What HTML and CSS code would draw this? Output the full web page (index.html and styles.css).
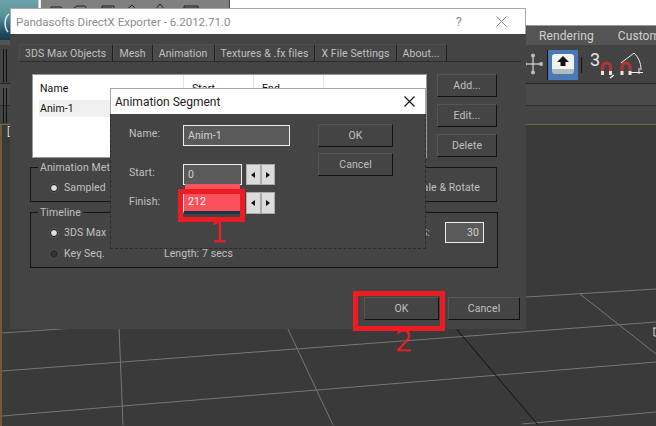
FILE: index.html
```html
<!DOCTYPE html>
<html lang="en">
<head>
<meta charset="utf-8">
<title>Pandasofts DirectX Exporter</title>
<link rel="stylesheet" href="styles.css">
</head>
<body>
<div class="stage">
  <div class="app">
    <div class="app-top">
      <div class="logo"><svg width="39" height="40" viewBox="0 0 39 40"><path d="M9 14C4 18 4 27 8 32" fill="none" stroke="#e8eef0" stroke-width="1.5"/></svg></div>
      <div class="quick">
        <svg width="188" height="9" viewBox="0 0 188 9" fill="none" stroke="#222"><path d="M10 9V6h10l3 3M33 9V7l3-2h8l2 4M61 9V5h12v4M61 7h10M85 9l6-5 5 5M114 9l5-6 5 6M143 9V5h14v4M143 7h14M165 8h5"/></svg>
      </div>
    </div>
    <div class="menu"><span>Rendering</span><span>Customize</span></div>
    <div class="toolbar">
      <div class="slot"><i></i><i></i></div>
      <div class="tools">
        <svg class="tool-move" width="20" height="24" viewBox="0 0 20 24"><path d="M10 5v14M3 12h14" stroke="#eee"/><g fill="#bbb"><circle cx="10" cy="3.500" r="2"/><circle cx="10" cy="20.500" r="2"/><circle cx="2" cy="12" r="2"/><circle cx="18" cy="12" r="2"/></g></svg>
        <div class="tool-active"><div class="key"><svg width="12" height="10" viewBox="0 0 12 10"><path d="M6 0l6 6H8.500v4h-5V6H0z" fill="#111"/></svg></div></div>
        <div class="tool-sep"></div>
        <span class="snap-num">3</span>
        <svg class="snap" width="46" height="28" viewBox="0 0 46 28" fill="none">
          <path d="M2.500 20v-5a4 4 0 0 1 8 0v5" stroke="#b03535" stroke-width="3"/><path d="M2.500 19v4M10.500 19v4" stroke="#e4e4e4" stroke-width="3"/>
          <path d="M10 26l4-3" stroke="#fff" stroke-width="1.500"/>
          <path d="M22 20v-5a4 4 0 0 1 8 0v5" stroke="#b03535" stroke-width="3"/><path d="M22 19v4M30 19v4" stroke="#e4e4e4" stroke-width="3"/>
          <path d="M21 11L34 1M34 1c4 4 7 9 7 17M31 20.500h12M39 16v6" stroke="#eee"/>
        </svg>
      </div>
    </div>
    <div class="ribbon">
      <div class="slot"><i></i><i></i></div>
    </div>
    <div class="viewport">
      <span class="vp-label">[</span>
      <svg class="grid" width="656" height="300" viewBox="0 126 656 300" fill="none" stroke="#767676">
        <path d="M2 334L526 298L656 290"/>
        <path d="M2 372L656 323"/>
        <path d="M2 417L656 363"/>
        <path d="M522 425L656 413"/>
        <path d="M119 328L123 426"/>
        <path d="M287 328L333 426"/>
        <path d="M580 295L656 355"/>
        <path d="M454 327L538 426" stroke="#111"/>
        <path d="M653 329h3M654 329v8h2" stroke="#ddd"/>
      </svg>
    </div>
  </div>

  <div class="dialog">
    <div class="titlebar">
      <span class="title-text">Pandasofts DirectX Exporter - 6.2012.71.0</span>
      <span class="help">?</span>
      <svg class="close" width="11" height="11" viewBox="0 0 11 11"><path d="M.5.500l10 10M10.500.500l-10 10" stroke="#8a8a8a"/></svg>
    </div>
    <div class="dialog-body">
      <div class="tabs">
        <span class="tab">3DS Max Objects</span>
        <span class="tab">Mesh</span>
        <span class="tab tab-active">Animation</span>
        <span class="tab">Textures &amp; .fx files</span>
        <span class="tab">X File Settings</span>
        <span class="tab">About...</span>
      </div>
      <div class="content">
        <div class="list">
          <div class="list-head"><span class="col-name">Name</span><span class="col">Start</span><span class="col">End</span><span class="col"></span></div>
          <div class="list-row">Anim-1</div>
        </div>
        <div class="actions">
          <div class="btn">Add...</div>
          <div class="btn">Edit...</div>
          <div class="btn">Delete</div>
        </div>
      </div>
      <div class="group group-method">
        <span class="legend">Animation Method</span>
        <span class="radio radio-on"></span><span>Sampled</span>
        <span class="scale">Scale &amp; Rotate</span>
      </div>
      <div class="group group-time">
        <span class="legend">Timeline</span>
        <div class="time-row">
          <span class="radio radio-on"></span><span>3DS Max</span>
          <span class="fps">FPS:</span>
          <span class="field field-fps">30</span>
        </div>
        <div class="time-row">
          <span class="radio"></span><span>Key Seq.</span>
          <span class="length">Length: 7 secs</span>
        </div>
      </div>
      <div class="footer">
        <div class="btn btn-ok">OK</div>
        <div class="btn btn-cancel">Cancel</div>
      </div>
    </div>
  </div>

  <div class="modal">
    <div class="modal-title">
      <span>Animation Segment</span>
      <svg width="11" height="11" viewBox="0 0 11 11"><path d="M.5.500l10 10M10.500.500l-10 10" stroke="#111" stroke-width="1.100"/></svg>
    </div>
    <div class="modal-body">
      <div class="form">
        <div class="form-row"><span class="label">Name:</span><span class="field field-name">Anim-1</span></div>
        <div class="form-row form-start">
          <span class="label">Start:</span><span class="field field-num">0</span>
          <span class="spin"><b class="arrow-l"></b></span><span class="spin"><b class="arrow-r"></b></span>
        </div>
        <div class="form-row form-finish">
          <span class="label">Finish:</span><span class="field field-num field-hot">212</span>
          <span class="spin spin-tall"><b class="arrow-l"></b></span><span class="spin spin-tall"><b class="arrow-r"></b></span>
        </div>
      </div>
      <div class="modal-actions">
        <div class="btn btn-modal">OK</div>
        <div class="btn btn-modal">Cancel</div>
      </div>
    </div>
  </div>

  <div class="hot-strip"></div>
  <div class="mark mark-finish"></div>
  <span class="num num-1">1</span>
  <div class="mark mark-ok"></div>
  <span class="num num-2">2</span>
</div>
</body>
</html>
```
FILE: styles.css
```css
* { box-sizing: border-box; }
html, body { margin: 0; padding: 0; }
body { background: #fff; }
.stage {
  position: relative;
  width: 656px;
  height: 426px;
  overflow: hidden;
  font: 10.500px/14px Roboto, "Liberation Sans", sans-serif;
  letter-spacing: 0.1px;
  color: #c0c0c0;
}

/* Background application */
.app { display: flex; flex-direction: column; height: 100%; background: #fff; }
.app-top { display: flex; height: 25px; flex: none; align-items: flex-start; }
.logo {
  width: 39px;
  height: 40px;
  flex: none;
  z-index: 1;
  background: linear-gradient(#6ea3a8 0, #56929a 40%, #1f4660 85%, #1b3a52 100%);
  border-right: 1px solid #ccc;
}
.quick {
  width: 190px;
  height: 9px;
  margin-left: 1px;
  background: #808080;
  border-left: 1px solid #eee;
  border-right: 1px solid #444;
  overflow: hidden;
}
.menu {
  flex: none;
  height: 20px;
  display: flex;
  gap: 24px;
  padding-left: 539px;
  white-space: nowrap;
  overflow: hidden;
  font-size: 12px;
  line-height: 20px;
  color: #d0d0d0;
  border-top: 1px solid #999;
  background: repeating-conic-gradient(#505050 0 25%, #585858 0 50%) 0 0 / 2px 2px;
}
.toolbar {
  flex: none;
  height: 39px;
  display: flex;
  justify-content: space-between;
  background: #434343;
  border-bottom: 1px solid #222;
}
.slot { width: 10px; display: flex; gap: 2px; padding: 4px 0 1px 3px; }
.slot i { width: 1px; background: #111; display: block; }
.tools { display: flex; align-items: flex-start; width: 130px; }
.tool-move { margin: 7px 0 0 -3px; flex: none; }
.tool-active {
  width: 31px;
  height: 30px;
  flex: none;
  margin: 5px 0 0 4px;
  padding: 4px;
  background: #4a7ab5;
  border-left: 1px solid #111;
}
.key {
  height: 20px;
  display: flex;
  justify-content: center;
  padding-top: 2px;
  border-radius: 3px;
  background: linear-gradient(#f2f2f2 0 75%, #b0bcc0 75%);
}
.tool-sep { width: 1px; height: 16px; flex: none; margin: 12px 8px 0 3px; background: #111; }
.snap-num { width: 10px; flex: none; font-size: 18px; line-height: 20px; margin-top: 5px; color: #e6e6e6; }
.snap { margin: 7px 0 0 0; flex: none; }
.ribbon {
  flex: none;
  height: 41px;
  background: linear-gradient(#4a4a4a 0 21px, #2e2e2e 21px 22px, #444 22px);
  border-bottom: 1px solid #7a6540;
}
.ribbon .slot { height: 100%; }
.viewport { position: relative; flex: 1; background: #3a3a3a; border-left: 2px solid #6e5c3a; }
.grid { position: absolute; left: -2px; top: 0; }
.vp-label { position: absolute; left: 5px; top: 0; color: #ddd; }

/* Exporter dialog */
.dialog {
  position: absolute;
  z-index: 2;
  left: 10px;
  top: 8px;
  width: 516px;
  height: 321px;
  display: flex;
  flex-direction: column;
  background: #444;
}
.titlebar {
  flex: none;
  height: 26px;
  display: flex;
  align-items: center;
  padding: 0 18px 0 5px;
  background: #fff;
  color: #8c8c8c;
  font-size: 11.500px;
  letter-spacing: 0;
  border: 1px solid #a8a8a8;
  border-bottom: 0;
}
.help { margin-left: auto; margin-right: 34px; color: #8c8c8c; font-size: 13px; }
.dialog-body { flex: 1; display: flex; flex-direction: column; padding-top: 10px; }
.tabs { display: flex; height: 18px; margin: 0 5px 0 9px; border-bottom: 1px solid #2c2c2c; }
.tab {
  padding: 0 6px 0 5px;
  line-height: 17px;
  white-space: nowrap;
  border-top: 1px solid #4e4e4e;
  border-left: 1px solid #4e4e4e;
  border-right: 1px solid #1e1e1e;
  border-radius: 2px 2px 0 0;
  background: #464646;
}
.tab-active { background: #4a4a4a; }
.content { display: flex; gap: 10px; margin: 12px 0 9px 22px; }
.list { width: 395px; height: 84px; background: #fff; color: #111; border: 1px solid #999; }
.list-head { display: flex; height: 25px; padding: 0 0 0 7px; }
.col-name { width: 143px; padding-top: 7px; }
.col { width: 70px; padding: 7px 0 0 8px; border-left: 1px solid #e4e4e4; }
.list-row { height: 17px; margin-left: 6px; padding-left: 1px; line-height: 17px; background: #f0f0f0; }
.actions { display: flex; flex-direction: column; gap: 7px; width: 60px; }
.btn {
  height: 23px;
  display: flex;
  align-items: center;
  justify-content: center;
  color: #c0c0c0;
  background: #444;
  border: 1px solid #555;
  border-right-color: #111;
  border-bottom-color: #111;
}
.group {
  position: relative;
  width: 467px;
  margin-left: 20px;
  border: 1px solid #151515;
}
.legend { position: absolute; left: 7px; top: -7px; padding: 0 2px; background: #444; }
.group-method { height: 35px; display: flex; align-items: center; padding: 6px 16px 0 19px; gap: 6px; }
.scale { margin-left: auto; }
.group-time { width: 468px; height: 56px; margin-top: 10px; padding: 9px 13px 0 19px; }
.time-row { display: flex; align-items: center; gap: 6px; height: 21px; }
.fps { margin-left: auto; margin-right: 9px; }
.length { margin-left: 53px; }
.radio {
  width: 8px;
  height: 8px;
  flex: none;
  border-radius: 50%;
  background: #333;
  border: 1px solid #222;
  box-shadow: 0 0 0 1px #555;
}
.radio-on { background: #e0e0e0; border: 1px solid #111; }
.field {
  display: flex;
  align-items: center;
  padding-left: 4px;
  color: #d0d0d0;
  border: 1px solid #ececec;
  background: repeating-conic-gradient(#565656 0 25%, #5e5e5e 0 50%) 0 0 / 2px 2px;
}
.field-fps { width: 39px; height: 21px; justify-content: flex-end; padding: 0 4px 0 0; }
.footer { display: flex; justify-content: flex-end; gap: 9px; margin-top: auto; padding: 0 6px 9px 0; }
.btn-ok { width: 75px; height: 23px; }
.btn-cancel { width: 72px; height: 23px; }

/* Animation Segment dialog */
.modal {
  position: absolute;
  z-index: 3;
  left: 110px;
  top: 88px;
  width: 316px;
  height: 161px;
  display: flex;
  flex-direction: column;
  background: #444;
}
.modal-title {
  flex: none;
  height: 26px;
  display: flex;
  align-items: center;
  justify-content: space-between;
  padding: 0 10px 0 4px;
  background: #fff;
  color: #222;
  font-size: 12px;
  letter-spacing: 0;
  border: 1px solid #a8a8a8;
  border-bottom: 0;
}
.modal-body {
  flex: 1;
  display: flex;
  justify-content: space-between;
  padding: 10px 32px 0 18px;
  border: 1px dashed #2a2a2a;
  border-top: 0;
}
.form { display: flex; flex-direction: column; }
.form-row { display: flex; align-items: center; }
.label { width: 54px; padding-bottom: 3px; }
.field-name { width: 107px; height: 21px; margin-top: 1px; }
.form-start { margin-top: 18px; }
.form-finish { margin-top: 7px; }
.field-num { width: 59px; height: 21px; margin-right: 4px; }
.form-finish .field-num { height: 22px; }
.field-hot { background: #f9525a; color: #fff; border-color: #f9525a #f9525a #1f3347 #ececec; border-bottom-width: 3px; }
.spin {
  width: 14.500px;
  height: 21px;
  display: flex;
  align-items: center;
  justify-content: center;
  background: #dcdcdc;
  border: 1px solid #aaa;
}
.spin-tall { height: 22px; }
.arrow-l, .arrow-r { width: 0; height: 0; border: 3px solid transparent; }
.arrow-l { border-right: 4px solid #111; border-left: 0; }
.arrow-r { border-left: 4px solid #111; border-right: 0; }
.modal-actions { display: flex; flex-direction: column; gap: 6px; }
.btn-modal { width: 75px; }

/* Red annotations */
.hot-strip { position: absolute; z-index: 4; left: 185px; top: 184px; width: 55px; height: 6px; background: #f9525a; }
.mark { position: absolute; z-index: 4; border: 5px solid #ed1c24; }
.mark-finish { left: 178px; top: 189px; width: 67px; height: 33px; }
.mark-ok { left: 353px; top: 291px; width: 92px; height: 40px; }
.num {
  position: absolute;
  z-index: 4;
  color: #ed1c24;
  font: 200 28px/28px "DejaVu Sans", sans-serif;
  -webkit-text-stroke: 0.7px #ed1c24;
}
.num-1 { left: 210px; top: 219px; }
.num-2 { left: 395px; top: 328px; }
```
